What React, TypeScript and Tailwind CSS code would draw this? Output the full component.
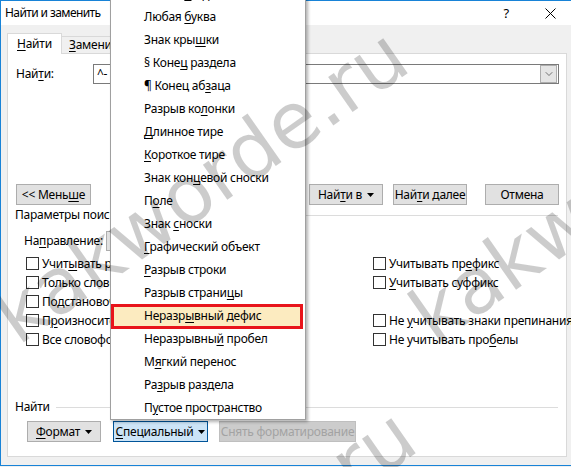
import React from 'react';
import { ChevronDown } from 'lucide-react';

type Item = [string, string, string];

// special characters list: text before the access key, the key, text after
const specials: Item[] = [
  ['Любая ', 'ц', 'ифра'],
  ['Любая ', 'б', 'уква'],
  ['Знак кры', 'ш', 'ки'],
  ['§ Коне', 'ц', ' раздела'],
  ['¶ Конец аб', 'з', 'аца'],
  ['Разрыв ко', 'л', 'онки'],
  ['', 'Д', 'линное тире'],
  ['', 'К', 'ороткое тире'],
  ['Знак кон', 'ц', 'евой сноски'],
  ['П', 'о', 'ле'],
  ['Знак ', 'с', 'носки'],
  ['', 'Г', 'рафический объект'],
  ['', 'Р', 'азрыв строки'],
  ['Разрыв страни', 'ц', 'ы'],
  ['Неразр', 'ы', 'вный дефис'],
  ['Неразрывны', 'й', ' пробел'],
  ['М', 'я', 'гкий перенос'],
  ['Ра', 'з', 'рыв раздела'],
  ['П', 'у', 'стое пространство'],
];

function K({ children }: { children: React.ReactNode }) {
  return <span className="underline underline-offset-[2px] decoration-1">{children}</span>;
}

function Caret() {
  return (
    <svg width="7" height="4" viewBox="0 0 7 4" className="inline-block align-middle ml-[5px]">
      <path d="M0 0h7L3.5 4z" fill="currentColor" />
    </svg>
  );
}

function Btn({ children, className = '' }: { children: React.ReactNode; className?: string }) {
  return (
    <div className={`flex items-center justify-center h-[21px] w-[74px] border border-[#adadad] bg-[#e1e1e1] ${className}`}>
      <span className="whitespace-nowrap">{children}</span>
    </div>
  );
}

function Check({ children }: { children: React.ReactNode }) {
  return (
    <div className="flex items-center h-[19px]">
      <span className="w-[13px] h-[13px] border border-[#333333] bg-white shrink-0" />
      <span className="ml-[3px] whitespace-nowrap">{children}</span>
    </div>
  );
}

function Group({ title, className = '' }: { title: string; className?: string }) {
  return (
    <div className={`flex items-center h-[14px] ${className}`}>
      <span>{title}</span>
      <span className="flex-1 h-px bg-[#dcdcdc] ml-[6px] mr-[8px]" />
    </div>
  );
}

function Watermark({ className }: { className: string }) {
  return (
    <div
      className={`absolute origin-[0_100%] rotate-[-35deg] whitespace-nowrap text-[78px] leading-none tracking-normal text-black/[0.2] font-['DejaVu_Sans',sans-serif] pointer-events-none ${className}`}>
      kakworde.ru
    </div>
  );
}

export default function App() {
  return (
    <div className="relative w-[571px] h-[467px] overflow-hidden bg-[#f0f0f0] text-[12px] leading-[14px] tracking-[-0.25px] text-black font-['Segoe_UI','Noto_Sans',sans-serif]">
      <div className="flex flex-col h-[466px] border-l border-t border-b border-[#1883d7]">
        {/* title bar */}
        <div className="flex items-center h-[24px] bg-white pl-[4px] shrink-0">
          <span className="flex-1 tracking-[-0.6px]">Найти и заменить</span>
          <span className="mr-[36px] text-[13px]">?</span>
          <svg width="11" height="11" viewBox="0 0 11 11" className="mr-[15px]">
            <path d="M0.5 0.5l10 10M10.5 0.5l-10 10" stroke="#000" strokeWidth="1" />
          </svg>
        </div>

        <div className="pl-[6px] pt-[8px]">
          {/* tabs */}
          <div className="flex items-start h-[21px]">
            <div className="relative z-10 flex items-center h-[21px] w-[55px] bg-white border border-b-0 border-[#d9d9d9] pl-[9px]">
              <span className="whitespace-nowrap">
                <K>Н</K>айти
              </span>
            </div>
            <div className="flex items-center mt-[3px] h-[17px] w-[70px] border-t border-r border-[#d9d9d9] pl-[7px]">
              <span className="whitespace-nowrap">
                <K>З</K>аменить
              </span>
            </div>
          </div>

          {/* tab page */}
          <div className="-mt-px w-[560px] h-[404px] bg-white border border-[#d9d9d9] pl-[8px] pt-[10px]">
            <div className="flex items-center h-[20px]">
              <span className="w-[77px]">
                Най<K>т</K>и:
              </span>
              <div className="flex items-center w-[466px] h-[20px] border border-[#7a7a7a]">
                <span className="flex-1 pl-[3px]">^-</span>
                <div className="flex items-center justify-center w-[17px] h-[18px] border border-[#adadad] bg-[#e5e5e5] mr-px">
                  <ChevronDown size={12} strokeWidth={1} />
                </div>
              </div>
            </div>

            <div className="flex items-center mt-[100px] h-[21px]">
              <Btn className="w-[75px]">
                &lt;&lt; Мень<K>ш</K>е
              </Btn>
              <div className="flex-1" />
              <Btn>
                Най<K>т</K>и в<Caret />
              </Btn>
              <Btn className="ml-[10px]">
                Най<K>т</K>и далее
              </Btn>
              <Btn className="ml-[18px] mr-[7px]">Отмена</Btn>
            </div>

            <Group title="Параметры поиска" className="mt-[3px] -ml-px" />

            <div className="flex items-center h-[20px] mt-[9px] pl-[8px]">
              <span className="w-[82px]">
                На<K>п</K>равление:
              </span>
              <div className="w-[90px] h-[20px] border border-[#adadad] bg-[#e1e1e1]" />
            </div>

            <div className="grid grid-cols-[347px_1fr] mt-[3px] pl-[10px]">
              <Check>
                Учит<K>ы</K>вать регистр
              </Check>
              <Check>
                Учитывать пр<K>е</K>фикс
              </Check>
              <Check>Только слово целиком</Check>
              <Check>
                <K>У</K>читывать суффикс
              </Check>
              <Check>Подстановочные знаки</Check>
              <div className="h-[19px]" />
              <Check>
                П<K>р</K>оизносится как
              </Check>
              <Check>
                Не <K>у</K>читывать знаки препинания
              </Check>
              <Check>Все словоформы</Check>
              <Check>
                Не учитывать про<K>б</K>елы
              </Check>
            </div>

            <Group title="Найти" className="mt-[51px] -ml-px" />

            <div className="flex items-center mt-[7px] pl-[11px] h-[21px]">
              <Btn className="w-[72px]">
                <K>Ф</K>ормат<Caret />
              </Btn>
              <div className="flex items-center justify-center ml-[12px] h-[21px] w-[95px] border border-[#005499] bg-[#cce4f7]">
                <span className="whitespace-nowrap">
                  <K>С</K>пециальный<Caret />
                </span>
              </div>
              <div className="flex items-center justify-center ml-[11px] h-[21px] w-[137px] border border-[#bfbfbf] bg-[#cccccc] text-[#a3a3a3]">
                <span className="whitespace-nowrap">Снять форматирование</span>
              </div>
            </div>
          </div>
        </div>
      </div>

      {/* dropdown list of special characters */}
      <div className="absolute left-[110px] top-[-19px] w-[196px] bg-white border border-[#a0a0a0] shadow-[2px_2px_3px_rgba(0,0,0,0.3)]">
        {specials.map(([a, k, b], i) => (
          <div key={i} className="relative flex items-center h-[23px] pl-[33px] whitespace-nowrap">
            {i === 14 && (
              <span className="absolute left-0 right-[2px] top-0 bottom-[-2px] bg-[#fcebc0] border-[3px] border-[#e8141b]" />
            )}
            <span className="relative">
              {a}
              <K>{k}</K>
              {b}
            </span>
          </div>
        ))}
      </div>

      {/* site watermark */}
      <Watermark className="left-[25px] top-[278px]" />
      <Watermark className="left-[442px] top-[278px]" />
      <Watermark className="left-[33px] top-[658px]" />
    </div>
  );
}
